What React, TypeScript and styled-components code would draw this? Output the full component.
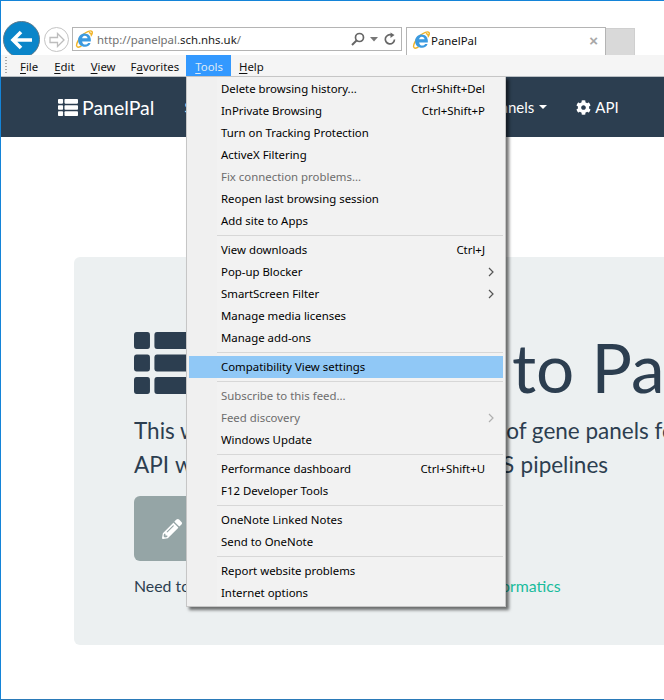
import React from "react";
import styled, { createGlobalStyle } from "styled-components";
import { FaCog, FaPencilAlt } from "react-icons/fa";

const Global = createGlobalStyle`
  html, body { margin: 0; padding: 0; background: #fff; }
  #root { width: 664px; height: 700px; }
`;

const UI_FONT = `"Noto Sans", "Open Sans", sans-serif`;
const PAGE_FONT = `Lato, "Open Sans", sans-serif`;

const Frame = styled.div`
  position: relative;
  box-sizing: border-box;
  width: 664px;
  height: 700px;
  overflow: hidden;
  display: flex;
  flex-direction: column;
  background: #fff;
  border-top: 1px solid #1484d8;
  border-left: 1px solid #1484d8;
  border-bottom: 1px solid #2a7ab8;
`;

const BrowserBar = styled.div`
  flex: none;
  height: 54px;
  display: flex;
  align-items: flex-start;
  padding: 20px 0 0 2px;
  box-sizing: border-box;
`;

const BackButton = styled.div`
  flex: none;
  width: 37px;
  height: 37px;
  box-sizing: border-box;
  border-radius: 50%;
  background: #0a85c9;
  border: 1px solid #5d7a8c;
  display: flex;
  align-items: center;
  justify-content: center;
`;

const ForwardButton = styled.div`
  flex: none;
  width: 25px;
  height: 25px;
  margin: 6px 0 0 4px;
  box-sizing: border-box;
  border-radius: 50%;
  background: #fff;
  border: 1px solid #c4c4c4;
  display: flex;
  align-items: center;
  justify-content: center;
`;

const AddressBar = styled.div`
  flex: none;
  width: 330px;
  height: 24px;
  margin: 6px 0 0 3px;
  box-sizing: border-box;
  border: 1px solid #b4b4b4;
  display: flex;
  align-items: center;
  padding: 0 4px 0 2px;
  font: 11.4px ${UI_FONT};
  color: #6f6f6f;
`;

const UrlText = styled.span`
  margin-left: 4px;
  flex: 1;
  white-space: nowrap;
  b { font-weight: 400; color: #1a1a1a; }
`;

const AddressTools = styled.div`
  display: flex;
  align-items: center;
  gap: 5px;
`;

const Tab = styled.div`
  flex: none;
  width: 200px;
  height: 28px;
  margin: 6px 0 0 4px;
  box-sizing: border-box;
  border: 1px solid #b4b4b4;
  border-bottom: 0;
  display: flex;
  align-items: center;
  padding: 0 5px 3px 5px;
  font: 11.4px ${UI_FONT};
  color: #111;
`;

const TabTitle = styled.span`
  margin-left: 1px;
  flex: 1;
`;

const TabClose = styled.span`
  font: 700 15px "Liberation Sans", sans-serif;
  color: #a8a8a8;
  margin-right: 2px;
`;

const NewTab = styled.div`
  flex: none;
  width: 29px;
  height: 27px;
  margin-top: 7px;
  box-sizing: border-box;
  background: #d9d9d9;
  border: 1px solid #cfcfcf;
  border-bottom: 0;
  border-left: 0;
`;

const MenuBar = styled.div`
  flex: none;
  position: relative;
  height: 22px;
  box-sizing: border-box;
  display: flex;
  align-items: stretch;
  background: #f5f5f5;
  border-bottom: 1px solid #b9bfc4;
  padding-left: 11px;
  font: 11.4px ${UI_FONT};
  color: #111;
`;

const Grip = styled.div`
  position: absolute;
  left: 4px;
  top: 2px;
  width: 2px;
  height: 18px;
  background: repeating-linear-gradient(to bottom, #a9a9a9 0 1px, transparent 1px 3px);
`;

const MenuBarItem = styled.div<{ $active?: boolean; $tight?: boolean }>`
  display: flex;
  align-items: center;
  padding: 1px ${(p) => (p.$tight ? 7 : 8)}px 0 ${(p) => (p.$tight ? 7 : p.$active ? 9 : 8)}px;
  height: 21px;
  box-sizing: border-box;
  background: ${(p) => (p.$active ? "#3399ff" : "transparent")};
  color: ${(p) => (p.$active ? "#dfeaf5" : "#111")};
  u { text-underline-offset: 2px; }
`;

const NavBar = styled.div`
  flex: none;
  height: 60px;
  box-sizing: border-box;
  background: #2c3e50;
  color: #fff;
  display: flex;
  align-items: center;
  padding-left: 57px;
  font-family: ${PAGE_FONT};
  font-size: 15px;
`;

const Brand = styled.div`
  display: flex;
  align-items: center;
  gap: 4px;
  font-size: 19.5px;
`;

const NavList = styled.div`
  display: flex;
  align-items: center;
  margin-left: 30px;
`;

const NavLink = styled.div<{ $gap?: number; $iconGap?: number }>`
  display: flex;
  align-items: center;
  gap: ${(p) => p.$iconGap ?? 4}px;
  margin-left: ${(p) => p.$gap ?? 0}px;
  font-size: 15px;
  white-space: nowrap;
`;

const Caret = styled.span`
  width: 0;
  height: 0;
  border-left: 4px solid transparent;
  border-right: 4px solid transparent;
  border-top: 4px solid #fff;
`;

const Content = styled.div`
  flex: 1;
  padding: 120px 0 0 73px;
`;

const Jumbotron = styled.div`
  box-sizing: border-box;
  width: 760px;
  height: 388px;
  background: #ecf0f1;
  border-radius: 6px;
  padding: 60px 0 0 60px;
  color: #2c3e50;
  font-family: ${PAGE_FONT};
`;

const Headline = styled.h1`
  margin: 0;
  height: 92px;
  display: flex;
  align-items: center;
  gap: 19px;
  font-size: 67.5px;
  font-weight: 400;
  white-space: nowrap;
`;

const HeadlineText = styled.span`
  margin-top: 6px;
`;

const Lead = styled.p`
  margin: 5px 0 0;
  font-size: 22.5px;
  line-height: 34px;
  font-weight: 400;
  white-space: nowrap;
`;

const LeadSecondLine = styled.span`
  word-spacing: 0.55px;
`;

const EditButton = styled.div`
  width: 270px;
  height: 65px;
  margin-top: 14px;
  box-sizing: border-box;
  background: #95a5a6;
  border-radius: 6px;
  color: #fff;
  display: flex;
  align-items: center;
  padding-left: 28px;
  font-size: 20px;
`;

const Note = styled.p`
  margin: 14px 0 0;
  font-size: 15.85px;
  line-height: 22px;
  white-space: nowrap;
  a { color: #18bc9c; text-decoration: none; }
`;

const Menu = styled.div`
  position: absolute;
  left: 185px;
  top: 75px;
  width: 320px;
  box-sizing: border-box;
  padding: 1px 2px 2px;
  border: 1px solid #c6c6c6;
  background: linear-gradient(to right, #f0f0f0 0 30px, #f2f2f2 30px);
  box-shadow: 3px 3px 3px rgba(0, 0, 0, 0.55);
  font: 11.4px ${UI_FONT};
  color: #000;
`;

const MenuRow = styled.div<{ $highlight?: boolean; $disabled?: boolean }>`
  height: 22px;
  box-sizing: border-box;
  display: flex;
  align-items: center;
  justify-content: space-between;
  padding: 0 18px 1px 32px;
  background: ${(p) => (p.$highlight ? "#90c8f6" : "transparent")};
  color: ${(p) => (p.$disabled ? "#6d6d6d" : "#000")};
  white-space: nowrap;
`;

const Chevron = styled.svg`
  margin-right: -9px;
`;

const Separator = styled.div`
  height: 1px;
  margin: 3px 0 3px 28px;
  background: #d7d7d7;
`;

const ThList = ({ width, height, color }: { width: number; height: number; color: string }) => (
  <svg width={width} height={height} viewBox="0 0 71 62" preserveAspectRatio="none" style={{ flex: "none", display: "block" }}>
    {[0, 1, 2].map((r) => (
      <g key={r} fill={color}>
        <rect x="0" y={r * 22.5} width="18" height="17" rx="3" />
        <rect x="23" y={r * 22.5} width="48" height="17" rx="3" />
      </g>
    ))}
  </svg>
);

const IeLogo = ({ size }: { size: number }) => (
  <svg width={size} height={size} viewBox="0 0 20 20" style={{ flex: "none" }}>
    <path d="M2.2 18.4C.6 16.6 3.6 10 8.6 5.4 13 1.4 17.6.2 18.8 1.6c.8 1 .3 2.6-.6 4-.2-1.5-1-2.6-2.8-2.8" fill="none" stroke="#f0b429" strokeWidth="1.6" />
    <path d="M2.2 18.4c1 1.1 3.4.5 5-.7" fill="none" stroke="#f0b429" strokeWidth="1.6" />
    <path transform="translate(-1.6 -1.8) scale(1.15)" d="M4.4 11.2C4.6 7.6 7.4 5 10.7 5c3.6 0 6 2.7 6 6.2 0 .5 0 1-.1 1.4H8.3c.2 1.9 1.3 3 3 3 1.2 0 2.2-.5 2.7-1.5h2.4c-.8 2.4-2.8 3.7-5.2 3.7-4 0-6.9-2.7-6.8-6.6zm3.9-1.6h5.2c-.1-1.5-1.2-2.5-2.6-2.5S8.5 8.1 8.3 9.6z" fill="#3b9ae0" fillRule="evenodd" />
  </svg>
);

const menuGroups: { label: string; hint?: string; arrow?: boolean; disabled?: boolean; highlight?: boolean }[][] = [
  [
    { label: "Delete browsing history...", hint: "Ctrl+Shift+Del" },
    { label: "InPrivate Browsing", hint: "Ctrl+Shift+P" },
    { label: "Turn on Tracking Protection" },
    { label: "ActiveX Filtering" },
    { label: "Fix connection problems...", disabled: true },
    { label: "Reopen last browsing session" },
    { label: "Add site to Apps" },
  ],
  [
    { label: "View downloads", hint: "Ctrl+J" },
    { label: "Pop-up Blocker", arrow: true },
    { label: "SmartScreen Filter", arrow: true },
    { label: "Manage media licenses" },
    { label: "Manage add-ons" },
  ],
  [{ label: "Compatibility View settings", highlight: true }],
  [
    { label: "Subscribe to this feed...", disabled: true },
    { label: "Feed discovery", arrow: true, disabled: true },
    { label: "Windows Update" },
  ],
  [
    { label: "Performance dashboard", hint: "Ctrl+Shift+U" },
    { label: "F12 Developer Tools" },
  ],
  [
    { label: "OneNote Linked Notes" },
    { label: "Send to OneNote" },
  ],
  [
    { label: "Report website problems" },
    { label: "Internet options" },
  ],
];

export default function App() {
  return (
    <>
      <Global />
      <Frame>
        <BrowserBar>
          <BackButton>
            <svg width="24" height="20" viewBox="0 0 24 20">
              <path d="M11 2 3 10l8 8M3.5 10H22" fill="none" stroke="#fff" strokeWidth="3.6" />
            </svg>
          </BackButton>
          <ForwardButton>
            <svg width="18" height="16" viewBox="0 0 18 16">
              <path d="M9.5 1.5 16 8l-6.5 6.5v-4H2v-5h7.5z" fill="none" stroke="#bdbdbd" strokeWidth="1.3" />
            </svg>
          </ForwardButton>
          <AddressBar>
            <IeLogo size={18} />
            <UrlText>
              http://panelpal.<b>sch.nhs.uk</b>/
            </UrlText>
            <AddressTools>
              <svg width="14" height="14" viewBox="0 0 14 14">
                <circle cx="8.5" cy="5.5" r="4" fill="none" stroke="#666" strokeWidth="1.7" />
                <path d="M5.5 8.5 1 13" stroke="#666" strokeWidth="2" />
              </svg>
              <svg width="8" height="5" viewBox="0 0 8 5">
                <path d="M0 0h8L4 4.5z" fill="#777" />
              </svg>
              <svg width="14" height="14" viewBox="0 0 14 14">
                <path d="M11.5 7.5A4.6 4.6 0 1 1 8.6 3" fill="none" stroke="#666" strokeWidth="1.7" />
                <path d="M7.5 .5 11.5 3 7.5 6z" fill="#666" />
              </svg>
            </AddressTools>
          </AddressBar>
          <Tab>
            <IeLogo size={18} />
            <TabTitle>PanelPal</TabTitle>
            <TabClose>×</TabClose>
          </Tab>
          <NewTab />
        </BrowserBar>
        <MenuBar>
          <Grip />
          <MenuBarItem><span><u>F</u>ile</span></MenuBarItem>
          <MenuBarItem><span><u>E</u>dit</span></MenuBarItem>
          <MenuBarItem><span><u>V</u>iew</span></MenuBarItem>
          <MenuBarItem $tight><span>F<u>a</u>vorites</span></MenuBarItem>
          <MenuBarItem $active><span><u>T</u>ools</span></MenuBarItem>
          <MenuBarItem><span><u>H</u>elp</span></MenuBarItem>
        </MenuBar>
        <NavBar>
          <Brand>
            <ThList width={20} height={17} color="#fff" />
            PanelPal
          </Brand>
          <NavList>
            <NavLink>Search</NavLink>
            <NavLink $gap={70}>Genes</NavLink>
            <NavLink $gap={70}>Regions</NavLink>
            <NavLink $gap={30} $iconGap={5}>Panels<Caret /></NavLink>
            <NavLink $gap={29}><FaCog size={15} />API</NavLink>
          </NavList>
        </NavBar>
        <Content>
          <Jumbotron>
            <Headline>
              <ThList width={63} height={62} color="#2c3e50" />
              <HeadlineText>Welcome to PanelPal</HeadlineText>
            </Headline>
            <Lead>
              This website has a searchable catalog of gene panels for
              <br />
              <LeadSecondLine>API which can be integrated with NGS pipelines</LeadSecondLine>
            </Lead>
            <EditButton><FaPencilAlt size={20} /></EditButton>
            <Note>
              Need to add or update a panel? Please contact <a href="#bioinformatics">Bioinformatics</a>
            </Note>
          </Jumbotron>
        </Content>
        <Menu>
          {menuGroups.map((group, i) => (
            <React.Fragment key={i}>
              {i > 0 && <Separator />}
              {group.map((item) => (
                <MenuRow key={item.label} $disabled={item.disabled} $highlight={item.highlight}>
                  <span>{item.label}</span>
                  {item.hint && <span>{item.hint}</span>}
                  {item.arrow && (
                    <Chevron width="6" height="10" viewBox="0 0 6 10">
                      <path d="M1 1l4 4-4 4" fill="none" stroke={item.disabled ? "#b0b0b0" : "#555"} strokeWidth="1.2" />
                    </Chevron>
                  )}
                </MenuRow>
              ))}
            </React.Fragment>
          ))}
        </Menu>
      </Frame>
    </>
  );
}
